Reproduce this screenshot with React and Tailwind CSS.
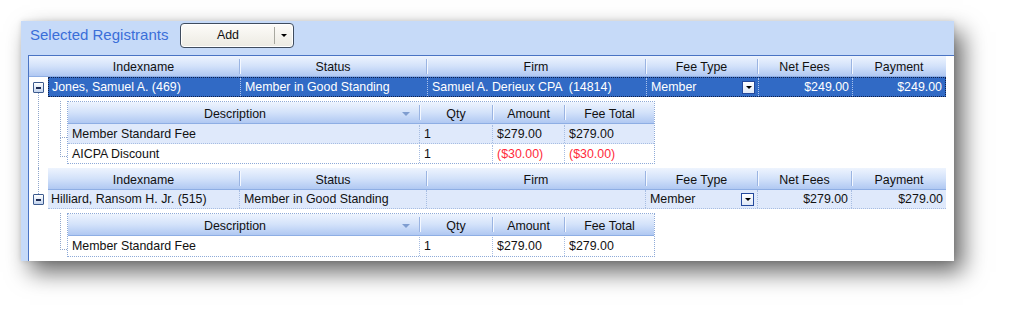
import React from "react";
import clsx from "clsx";

const masterCols = [
  { label: "Indexname", w: "w-[192px]" },
  { label: "Status", w: "w-[187px]" },
  { label: "Firm", w: "w-[219px]" },
  { label: "Fee Type", w: "w-[112px]" },
  { label: "Net Fees", w: "w-[94px]" },
  { label: "Payment", w: "w-[94px]" },
];

const detailCols = [
  { label: "Description", w: "w-[352px]" },
  { label: "Qty", w: "w-[73px]" },
  { label: "Amount", w: "w-[72px]" },
  { label: "Fee Total", w: "w-[89px]" },
];

const registrants = [
  {
    name: "Jones, Samuel A. (469)",
    status: "Member in Good Standing",
    firm: "Samuel A. Derieux CPA  (14814)",
    feeType: "Member",
    net: "$249.00",
    payment: "$249.00",
    selected: true,
    fees: [
      { desc: "Member Standard Fee", qty: "1", amount: "$279.00", total: "$279.00" },
      { desc: "AICPA Discount", qty: "1", amount: "($30.00)", total: "($30.00)", negative: true },
    ],
  },
  {
    name: "Hilliard, Ransom H. Jr. (515)",
    status: "Member in Good Standing",
    firm: "",
    feeType: "Member",
    net: "$279.00",
    payment: "$279.00",
    fees: [{ desc: "Member Standard Fee", qty: "1", amount: "$279.00", total: "$279.00" }],
  },
];

const headerBg = "bg-gradient-to-b from-[#eef4fe] via-[#d3e2fa] to-[#b0c8f2] border-b border-[#8eaee4]";

function Sep() {
  return <span className="w-px h-[15px] bg-[#9ab4e2] shadow-[1px_0_0_#f4f8ff] shrink-0" />;
}

function HeaderCell({ label, w, last, sort }) {
  return (
    <div className={clsx("h-full flex items-center shrink-0", w)}>
      <span className="flex-1 text-center pt-[3px]">{label}</span>
      {sort && <span className="mr-[9px] mt-[2px] w-0 h-0 border-l-[4px] border-r-[4px] border-t-[4px] border-l-transparent border-r-transparent border-t-[#7f9dd0]" />}
      {!last && <Sep />}
    </div>
  );
}

function Expander({ className }) {
  return (
    <div
      className={clsx(
        "w-[11px] h-[11px] shrink-0 rounded-[1px] border border-[#3d5b8e] bg-gradient-to-b from-white to-[#c3d4ee] flex items-center justify-center",
        className
      )}
    >
      <div className="w-[5px] h-[2px] bg-[#1d2a52]" />
    </div>
  );
}

function DropBtn() {
  return (
    <div className="w-[13px] h-[13px] shrink-0 border border-[#23489c] bg-gradient-to-b from-white to-[#dfe8f7] flex items-center justify-center">
      <span className="w-0 h-0 border-l-[3px] border-r-[3px] border-t-[3px] border-l-transparent border-r-transparent border-t-black" />
    </div>
  );
}

function MasterHeader() {
  return (
    <div className={clsx("h-[22px] flex", headerBg)}>
      {masterCols.map((c, i) => (
        <HeaderCell key={c.label} {...c} last={i === masterCols.length - 1} />
      ))}
    </div>
  );
}

function MasterRow({ r }) {
  const sep = r.selected ? "border-r border-dotted border-[#a9c1ec]" : "border-r border-dotted border-[#a7bde2]";
  return (
    <div
      className={clsx(
        "flex w-[898px]",
        r.selected
          ? "h-[20px] bg-[#316ac5] text-white border border-dotted border-[#10204a]"
          : "h-[19px] bg-[#dfe9fb] text-[#111] border-b border-dotted border-[#a7bde2]"
      )}
    >
      <div className={clsx("w-[192px] shrink-0 flex items-center px-[3px] pt-[1px] whitespace-pre", sep)}>{r.name}</div>
      <div className={clsx("w-[187px] shrink-0 flex items-center px-[4px] pt-[1px] whitespace-pre", sep)}>{r.status}</div>
      <div className={clsx("w-[219px] shrink-0 flex items-center px-[4px] pt-[1px] whitespace-pre", sep)}>{r.firm}</div>
      <div className={clsx("w-[112px] shrink-0 flex items-center justify-between pl-[4px] pr-[3px]", sep)}>
        <span className="pt-[1px]">{r.feeType}</span>
        <DropBtn />
      </div>
      <div className={clsx("w-[94px] shrink-0 flex items-center justify-end px-[3px] pt-[1px]", sep)}>{r.net}</div>
      <div className="flex-1 flex items-center justify-end px-[3px] pt-[1px]">{r.payment}</div>
    </div>
  );
}

function Detail({ fees }) {
  return (
    <div className="flex pt-[4px]">
      <div className="w-[19px] shrink-0 pl-[12px] flex flex-col">
        <div className="h-[37px] border-l border-b border-dotted border-[#8fa6cc]" />
        {fees.slice(1).map((_, i) => (
          <div key={i} className="h-[19px] border-l border-b border-dotted border-[#8fa6cc]" />
        ))}
      </div>
      <div className="border border-dotted border-[#8eaad8]">
        <div className={clsx("h-[22px] flex", headerBg)}>
          {detailCols.map((c, i) => (
            <HeaderCell key={c.label} {...c} last={i === detailCols.length - 1} sort={i === 0} />
          ))}
        </div>
        {fees.map((f, i) => (
          <div
            key={f.desc}
            className={clsx(
              "flex pt-[1px]",
              i === 0 ? "h-[20px]" : "h-[19px]",
              i === 0 && fees.length > 1 ? "bg-[#dfe9fb]" : "bg-white",
              i < fees.length - 1 && "border-b border-dotted border-[#a7bde2]"
            )}
          >
            <div className="w-[352px] shrink-0 flex items-center px-[4px] border-r border-dotted border-[#a7bde2]">{f.desc}</div>
            <div className="w-[73px] shrink-0 flex items-center px-[4px] border-r border-dotted border-[#a7bde2]">{f.qty}</div>
            <div className={clsx("w-[72px] shrink-0 flex items-center px-[4px] border-r border-dotted border-[#a7bde2]", f.negative && "text-[#ff2a3a]")}>
              {f.amount}
            </div>
            <div className={clsx("w-[89px] shrink-0 flex items-center px-[4px]", f.negative && "text-[#ff2a3a]")}>{f.total}</div>
          </div>
        ))}
      </div>
    </div>
  );
}

export default function App() {
  const [first, second] = registrants;
  return (
    <div className="w-[1009px] h-[316px] bg-white pt-[21px] pl-[21px] font-['Liberation_Sans',Arial,sans-serif] text-[12.4px] text-[#111]">
      <div className="w-[933px] h-[240px] bg-[#c6daf8] flex flex-col shadow-[9px_11px_22px_rgba(0,0,0,0.6),0_0_5px_rgba(0,0,0,0.12)]">
        {/* title bar */}
        <div className="h-[34px] shrink-0 flex items-start pt-[2px] pl-[9px] gap-[12px]">
          <div className="h-[25px] flex items-center text-[15px] text-[#3a6ed8]">Selected Registrants</div>
          <button className="w-[114px] h-[25px] flex rounded-[4px] border border-[#3f4c5e] bg-gradient-to-b from-[#fdfcf9] to-[#eceae2] text-[#111] text-[12.4px] shadow-[inset_0_0_0_1px_#ffffff]">
            <span className="flex-1 h-full flex items-center justify-center">Add</span>
            <span className="w-px h-[17px] self-center bg-[#a8a8a0]" />
            <span className="w-[18px] h-full flex items-center justify-center">
              <span className="w-0 h-0 border-l-[3px] border-r-[3px] border-t-[3px] border-l-transparent border-r-transparent border-t-black" />
            </span>
          </button>
        </div>

        {/* grid */}
        <div className="flex-1 ml-[7px] bg-white border-t border-l border-[#4a74c4] flex flex-col">
          <div className={clsx("h-[21px] flex w-[917px]", headerBg)}>
            <div className="w-[19px] shrink-0" />
            {masterCols.map((c, i) => (
              <HeaderCell key={c.label} {...c} last={i === masterCols.length - 1} />
            ))}
          </div>

          {/* registrant 1 */}
          <div className="flex">
            <div className="w-[19px] shrink-0 flex flex-col items-center">
              <Expander className="mt-[5px]" />
              <div className="flex-1 border-l border-dotted border-[#8fa6cc]" />
            </div>
            <div className="flex flex-col pb-[4px]">
              <MasterRow r={first} />
              <Detail fees={first.fees} />
            </div>
          </div>

          {/* registrant 2 */}
          <div className="flex">
            <div className="w-[19px] shrink-0 flex flex-col items-center">
              <div className="h-[26px] border-l border-dotted border-[#8fa6cc]" />
              <Expander />
            </div>
            <div className="flex flex-col">
              <MasterHeader />
              <MasterRow r={second} />
              <Detail fees={second.fees} />
            </div>
          </div>
        </div>
      </div>
    </div>
  );
}
